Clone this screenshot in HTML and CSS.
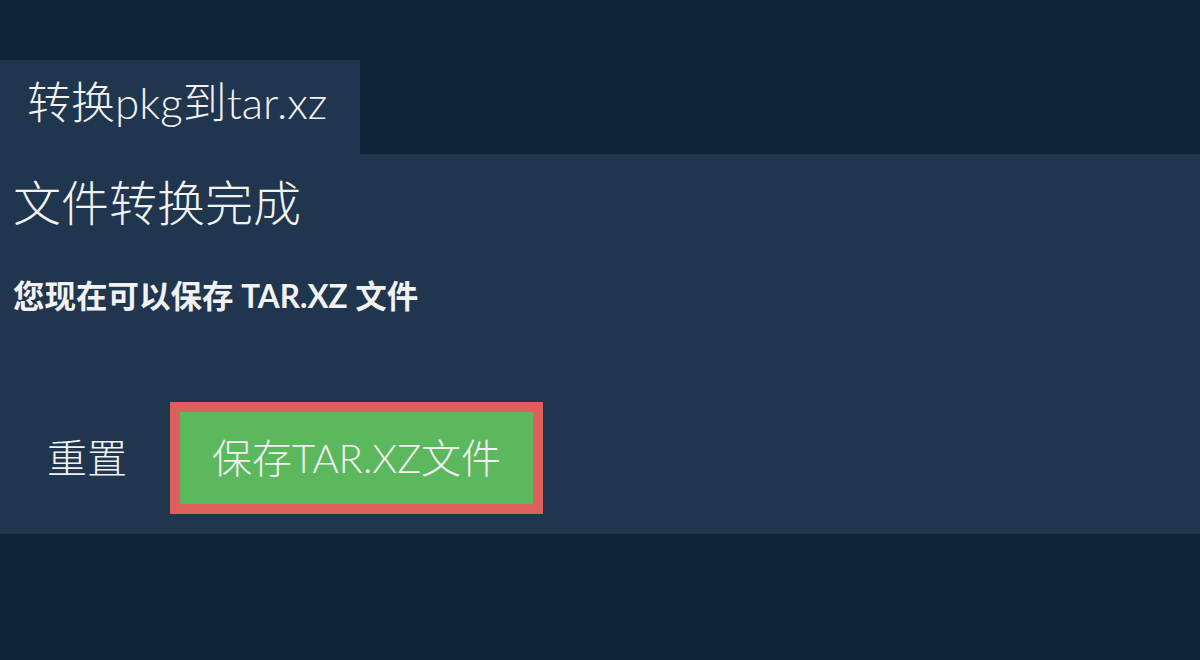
FILE: index.html
```html
<!DOCTYPE html>
<html lang="zh-CN">
<head>
<meta charset="utf-8">
<title>转换pkg到tar.xz</title>
<link rel="stylesheet" href="styles.css">
</head>
<body>
<div class="tabs">
  <div class="tab">转换pkg到tar.xz</div>
</div>
<section class="panel">
  <h2 class="title">文件转换完成</h2>
  <p class="note">您现在可以保存 TAR.XZ 文件</p>
  <div class="actions">
    <button class="btn btn-reset">重置</button>
    <button class="btn btn-save">保存TAR.XZ文件</button>
  </div>
</section>
</body>
</html>
```

FILE: styles.css
```css
html, body {
  margin: 0;
  padding: 0;
}
body {
  background: #0f2339;
  color: #f2f2f2;
  font-family: "Lato", "Noto Sans CJK SC", sans-serif;
  width: 1200px;
  height: 660px;
  overflow: hidden;
}
.tabs {
  padding-top: 60px;
  display: flex;
}
.tab {
  background: #20354e;
  width: 360px;
  box-sizing: border-box;
  padding: 17px 0 27px 27px;
  font-family: "Lato", "Noto Sans CJK SC Light", "Noto Sans CJK SC", sans-serif;
  font-size: 44px;
  font-weight: 300;
  line-height: 50px;
  white-space: nowrap;
}
.panel {
  background: #20354e;
  padding: 20px 13px 20px 13px;
}
.title {
  margin: 0;
  font-family: "Lato", "Noto Sans CJK SC Light", "Noto Sans CJK SC", sans-serif;
  font-size: 48px;
  font-weight: 300;
  line-height: 1.2;
}
.note {
  margin: 46px 0 0 0;
  font-size: 31.5px;
  font-weight: 700;
  line-height: 1.2;
}
.actions {
  margin-top: 87px;
  display: flex;
  align-items: center;
  gap: 10px;
}
.btn {
  font-family: "Lato", "Noto Sans CJK SC Light", "Noto Sans CJK SC", sans-serif;
  font-size: 40px;
  font-weight: 300;
  line-height: 48px;
  color: #f2f2f2;
  border: 10px solid transparent;
  background: transparent;
  padding: 22px 32px;
  margin: 0;
  cursor: pointer;
}
.btn-reset {
  padding-left: 24px;
  padding-right: 23px;
}
.btn-save {
  background: #5cb85c;
  border-color: #dd605c;
}
```
